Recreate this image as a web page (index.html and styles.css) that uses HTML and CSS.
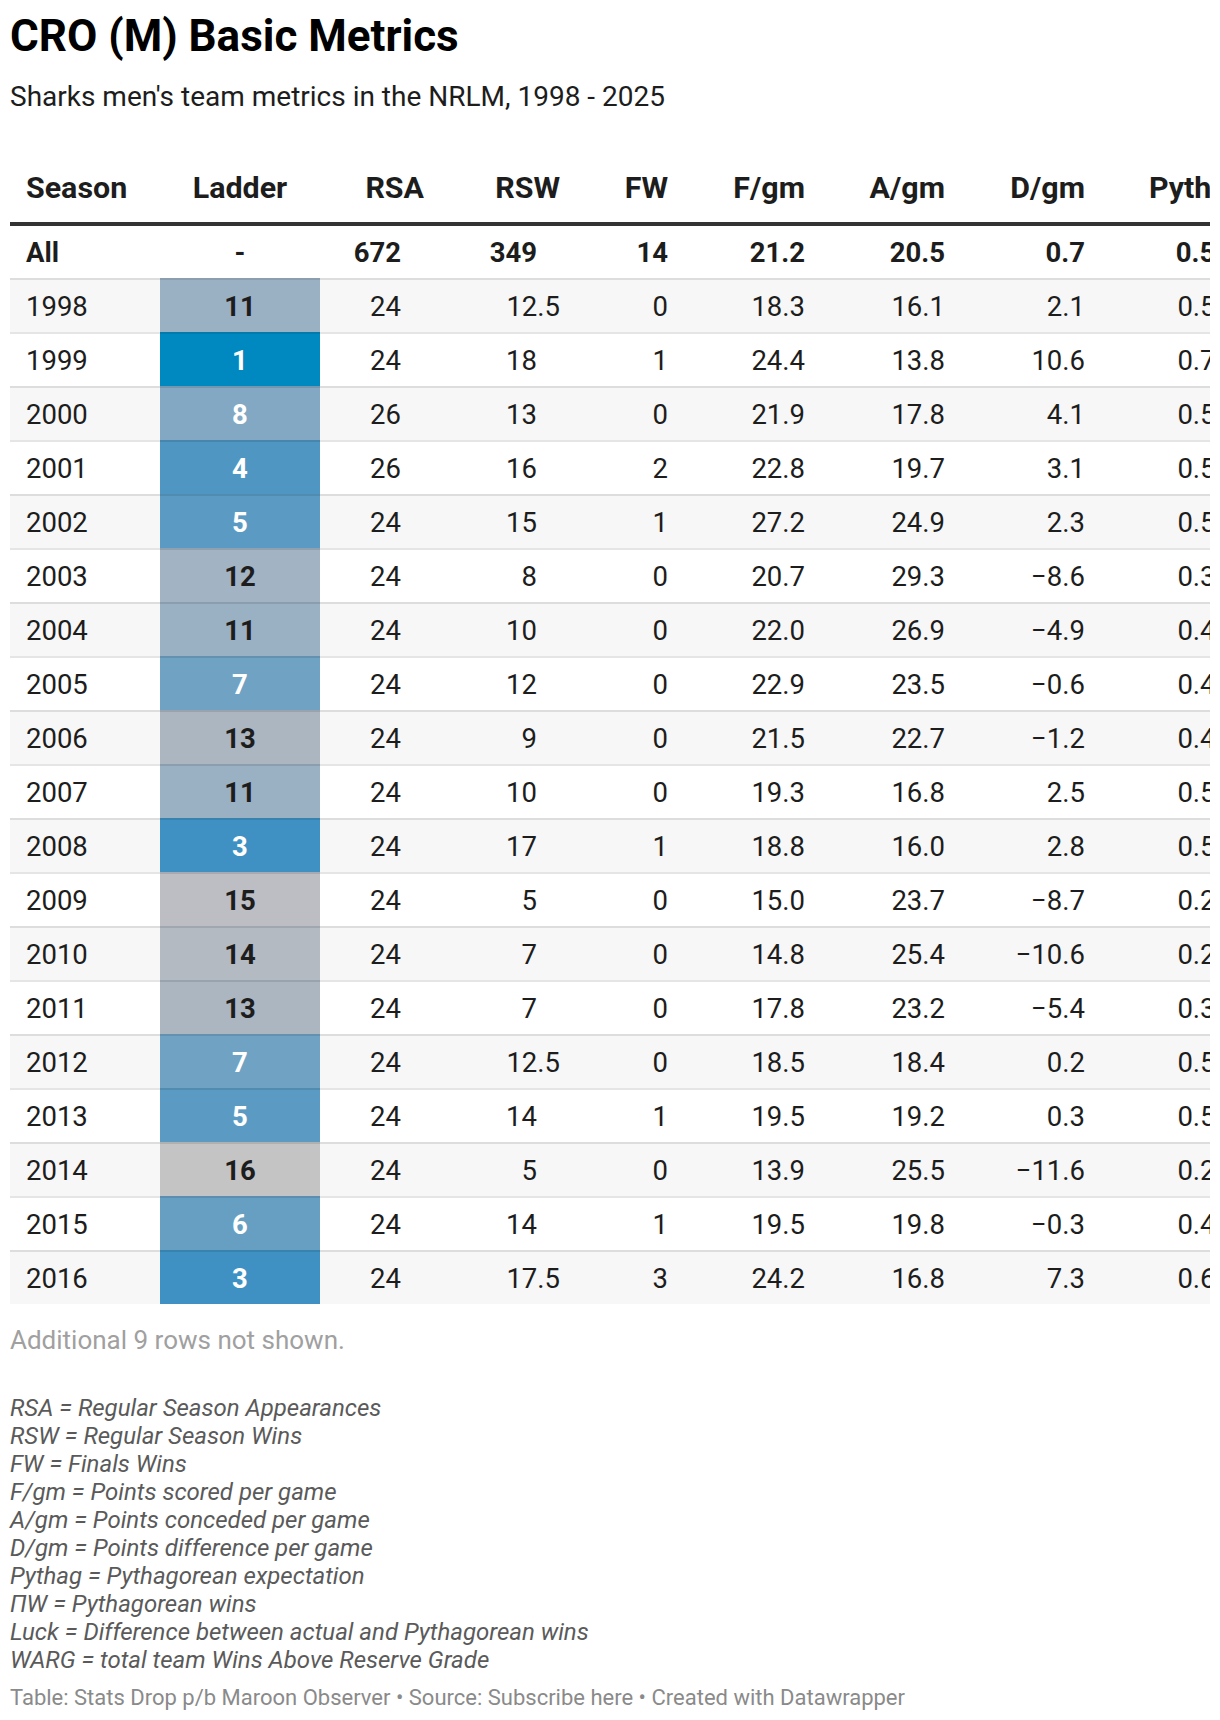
FILE: index.html
```html
<!DOCTYPE html>
<html lang="en">
<head>
<meta charset="utf-8">
<title>CRO (M) Basic Metrics</title>
<link rel="stylesheet" href="styles.css">
</head>
<body>
<div class="chart">
  <h1 class="title">CRO (M) Basic Metrics</h1>
  <p class="subtitle">Sharks men's team metrics in the NRLM, 1998 - 2025</p>

  <div class="table-wrap">
    <table class="metrics">
      <colgroup>
        <col class="c-season"><col class="c-ladder"><col class="c-rsa"><col class="c-rsw"><col class="c-fw"><col class="c-fgm"><col class="c-agm"><col class="c-dgm"><col class="c-pyth">
      </colgroup>
      <thead>
        <tr>
          <th class="left">Season</th>
          <th class="center">Ladder</th>
          <th>RSA</th>
          <th>RSW</th>
          <th>FW</th>
          <th>F/gm</th>
          <th>A/gm</th>
          <th>D/gm</th>
          <th>Pythag</th>
        </tr>
      </thead>
      <tbody>
        <tr class="total">
          <td class="left">All</td><td class="center">-</td><td class="num pad">672</td><td class="num pad">349</td><td class="num">14</td><td class="num">21.2</td><td class="num">20.5</td><td class="num">0.7</td><td class="num py">0.51</td>
        </tr>
        <tr class="odd"><td class="left">1998</td><td class="center lad l11">11</td><td class="num pad">24</td><td class="num">12.5</td><td class="num">0</td><td class="num">18.3</td><td class="num">16.1</td><td class="num">2.1</td><td class="num py">0.56</td></tr>
        <tr><td class="left">1999</td><td class="center lad l1">1</td><td class="num pad">24</td><td class="num pad">18</td><td class="num">1</td><td class="num">24.4</td><td class="num">13.8</td><td class="num">10.6</td><td class="num py">0.73</td></tr>
        <tr class="odd"><td class="left">2000</td><td class="center lad l8">8</td><td class="num pad">26</td><td class="num pad">13</td><td class="num">0</td><td class="num">21.9</td><td class="num">17.8</td><td class="num">4.1</td><td class="num py">0.58</td></tr>
        <tr><td class="left">2001</td><td class="center lad l4">4</td><td class="num pad">26</td><td class="num pad">16</td><td class="num">2</td><td class="num">22.8</td><td class="num">19.7</td><td class="num">3.1</td><td class="num py">0.56</td></tr>
        <tr class="odd"><td class="left">2002</td><td class="center lad l5">5</td><td class="num pad">24</td><td class="num pad">15</td><td class="num">1</td><td class="num">27.2</td><td class="num">24.9</td><td class="num">2.3</td><td class="num py">0.54</td></tr>
        <tr><td class="left">2003</td><td class="center lad l12">12</td><td class="num pad">24</td><td class="num pad">8</td><td class="num">0</td><td class="num">20.7</td><td class="num">29.3</td><td class="num">−8.6</td><td class="num py">0.35</td></tr>
        <tr class="odd"><td class="left">2004</td><td class="center lad l11">11</td><td class="num pad">24</td><td class="num pad">10</td><td class="num">0</td><td class="num">22.0</td><td class="num">26.9</td><td class="num">−4.9</td><td class="num py">0.42</td></tr>
        <tr><td class="left">2005</td><td class="center lad l7">7</td><td class="num pad">24</td><td class="num pad">12</td><td class="num">0</td><td class="num">22.9</td><td class="num">23.5</td><td class="num">−0.6</td><td class="num py">0.49</td></tr>
        <tr class="odd"><td class="left">2006</td><td class="center lad l13">13</td><td class="num pad">24</td><td class="num pad">9</td><td class="num">0</td><td class="num">21.5</td><td class="num">22.7</td><td class="num">−1.2</td><td class="num py">0.47</td></tr>
        <tr><td class="left">2007</td><td class="center lad l11">11</td><td class="num pad">24</td><td class="num pad">10</td><td class="num">0</td><td class="num">19.3</td><td class="num">16.8</td><td class="num">2.5</td><td class="num py">0.56</td></tr>
        <tr class="odd"><td class="left">2008</td><td class="center lad l3">3</td><td class="num pad">24</td><td class="num pad">17</td><td class="num">1</td><td class="num">18.8</td><td class="num">16.0</td><td class="num">2.8</td><td class="num py">0.57</td></tr>
        <tr><td class="left">2009</td><td class="center lad l15">15</td><td class="num pad">24</td><td class="num pad">5</td><td class="num">0</td><td class="num">15.0</td><td class="num">23.7</td><td class="num">−8.7</td><td class="num py">0.29</td></tr>
        <tr class="odd"><td class="left">2010</td><td class="center lad l14">14</td><td class="num pad">24</td><td class="num pad">7</td><td class="num">0</td><td class="num">14.8</td><td class="num">25.4</td><td class="num">−10.6</td><td class="num py">0.25</td></tr>
        <tr><td class="left">2011</td><td class="center lad l13">13</td><td class="num pad">24</td><td class="num pad">7</td><td class="num">0</td><td class="num">17.8</td><td class="num">23.2</td><td class="num">−5.4</td><td class="num py">0.37</td></tr>
        <tr class="odd"><td class="left">2012</td><td class="center lad l7">7</td><td class="num pad">24</td><td class="num">12.5</td><td class="num">0</td><td class="num">18.5</td><td class="num">18.4</td><td class="num">0.2</td><td class="num py">0.50</td></tr>
        <tr><td class="left">2013</td><td class="center lad l5">5</td><td class="num pad">24</td><td class="num pad">14</td><td class="num">1</td><td class="num">19.5</td><td class="num">19.2</td><td class="num">0.3</td><td class="num py">0.51</td></tr>
        <tr class="odd"><td class="left">2014</td><td class="center lad l16">16</td><td class="num pad">24</td><td class="num pad">5</td><td class="num">0</td><td class="num">13.9</td><td class="num">25.5</td><td class="num">−11.6</td><td class="num py">0.23</td></tr>
        <tr><td class="left">2015</td><td class="center lad l6">6</td><td class="num pad">24</td><td class="num pad">14</td><td class="num">1</td><td class="num">19.5</td><td class="num">19.8</td><td class="num">−0.3</td><td class="num py">0.49</td></tr>
        <tr class="odd"><td class="left">2016</td><td class="center lad l3">3</td><td class="num pad">24</td><td class="num">17.5</td><td class="num">3</td><td class="num">24.2</td><td class="num">16.8</td><td class="num">7.3</td><td class="num py">0.68</td></tr>
      </tbody>
    </table>
  </div>

  <p class="more">Additional 9 rows not shown.</p>

  <p class="legend">RSA = Regular Season Appearances<br>RSW = Regular Season Wins<br>FW = Finals Wins<br>F/gm = Points scored per game<br>A/gm = Points conceded per game<br>D/gm = Points difference per game<br>Pythag = Pythagorean expectation<br>ΠW = Pythagorean wins<br>Luck = Difference between actual and Pythagorean wins<br>WARG = total team Wins Above Reserve Grade</p>

  <p class="footer">Table: Stats Drop p/b Maroon Observer • Source: Subscribe here • Created with Datawrapper</p>
</div>
</body>
</html>
```

FILE: styles.css
```css
html, body {
  margin: 0;
  padding: 0;
  background: #ffffff;
  overflow: hidden;
}

body {
  font-family: Roboto, "Liberation Sans", sans-serif;
  color: #1d1d1d;
}

.chart {
  width: 1200px;
  padding: 10px 10px 0 10px;
}

.title {
  margin: 0;
  font-size: 44px;
  line-height: 52px;
  font-weight: 700;
  color: #000000;
}

.subtitle {
  margin: 18px 0 0 0;
  font-size: 28px;
  line-height: 34px;
  color: #1d1d1d;
}

.table-wrap {
  margin-top: 40px;
  width: 1200px;
  overflow: hidden;
}

.metrics {
  border-collapse: separate;
  border-spacing: 0;
  table-layout: fixed;
  width: 1235px;
}

.c-season { width: 150px; }
.c-ladder { width: 160px; }
.c-rsa { width: 104px; }
.c-rsw { width: 136px; }
.c-fw { width: 108px; }
.c-fgm { width: 137px; }
.c-agm { width: 140px; }
.c-dgm { width: 140px; }
.c-pyth { width: 160px; }

.metrics th {
  font-size: 30.4px;
  line-height: 36px;
  font-weight: 700;
  padding: 16px 0;
  text-align: right;
  white-space: nowrap;
  border-bottom: 4px solid #333333;
  color: #1d1d1d;
}

.metrics td {
  font-size: 27.5px;
  line-height: 32px;
  height: 50px;
  padding: 2px 0 0 0;
  text-align: right;
  white-space: nowrap;
  vertical-align: middle;
  border-top: 2px solid rgba(0, 0, 0, 0.1);
}

.metrics .total td {
  border-top: 0;
  font-weight: 700;
}

.metrics .odd td {
  background: #f7f7f7;
}

.metrics .left {
  text-align: left;
  padding-left: 16px;
}

.metrics .center {
  text-align: center;
}

.metrics td.pad {
  padding-right: 23px;
}

.metrics td.py {
  padding-right: 14px;
}

.metrics td.lad {
  font-weight: 700;
  color: #ffffff;
}

.metrics .odd td.l1, .metrics td.l1 { background: #0089c0; }
.metrics .odd td.l3, .metrics td.l3 { background: #3f91c3; }
.metrics .odd td.l4, .metrics td.l4 { background: #4f96c2; }
.metrics .odd td.l5, .metrics td.l5 { background: #5b9bc3; }
.metrics .odd td.l6, .metrics td.l6 { background: #679fc3; }
.metrics .odd td.l7, .metrics td.l7 { background: #70a2c3; }
.metrics .odd td.l8, .metrics td.l8 { background: #82a8c3; }
.metrics .odd td.l11, .metrics td.l11 { background: #9ab0c3; color: #1d1d1d; }
.metrics .odd td.l12, .metrics td.l12 { background: #a2b3c3; color: #1d1d1d; }
.metrics .odd td.l13, .metrics td.l13 { background: #abb6c1; color: #1d1d1d; }
.metrics .odd td.l14, .metrics td.l14 { background: #b3bac2; color: #1d1d1d; }
.metrics .odd td.l15, .metrics td.l15 { background: #bcbec3; color: #1d1d1d; }
.metrics .odd td.l16, .metrics td.l16 { background: #c4c4c4; color: #1d1d1d; }

.more {
  margin: 20px 0 0 0;
  font-size: 26px;
  line-height: 32px;
  color: #a0a0a0;
}

.legend {
  margin: 38px 0 0 0;
  font-size: 24px;
  line-height: 28px;
  font-style: italic;
  color: #5a5a5a;
}

.footer {
  margin: 10px 0 0 0;
  font-size: 22px;
  line-height: 28px;
  color: #8a8a8a;
}
```
